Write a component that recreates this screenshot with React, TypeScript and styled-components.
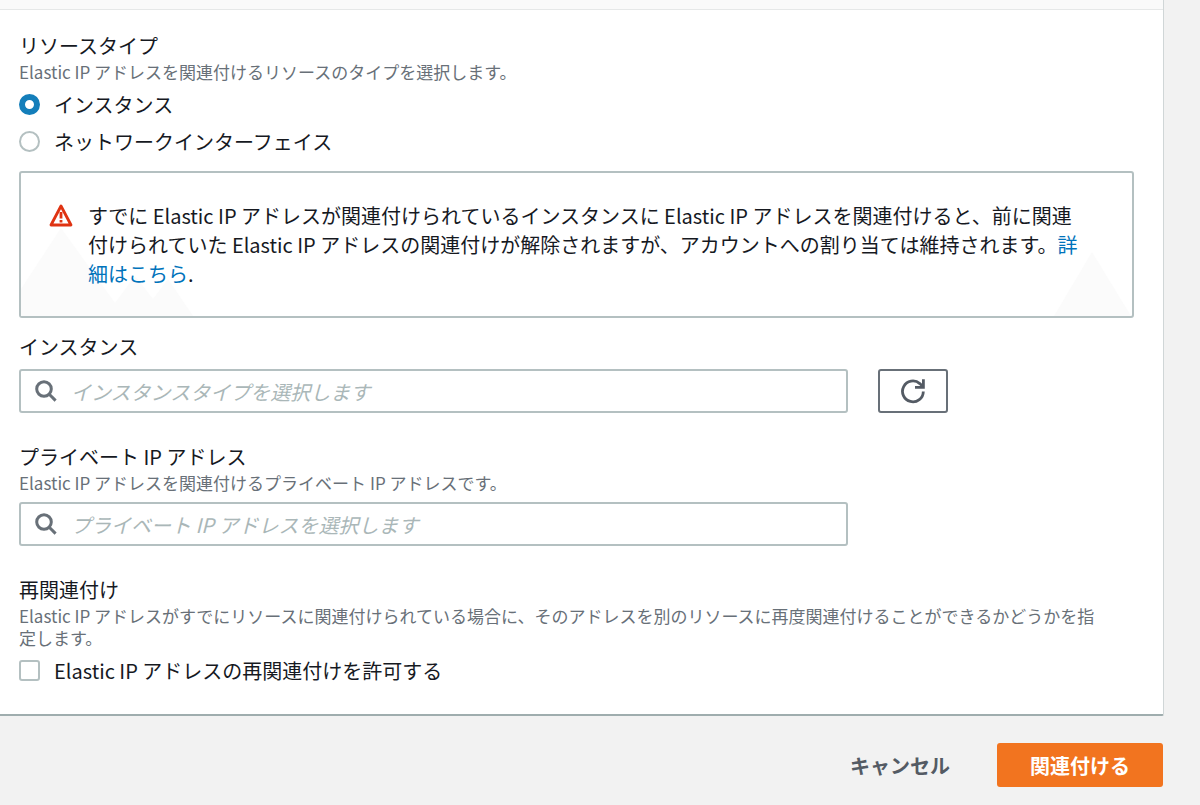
import React from "react";
import styled, { createGlobalStyle } from "styled-components";

const GlobalStyle = createGlobalStyle`
  *, *::before, *::after { box-sizing: border-box; }
  body {
    margin: 0;
    background: #f2f2f2;
    color: #16191f;
    font-family: "Noto Sans CJK JP", "Noto Sans", sans-serif;
    font-size: 20px;
    line-height: 29px;
  }
  button, input { font: inherit; }
`;

const Page = styled.main`
  padding-right: 36px;
`;

const Panel = styled.section`
  background: #fff;
  border-right: 1px solid #d0d6d7;
  border-bottom: 2px solid #9fadae;
  border-bottom-right-radius: 2px;
`;

const PanelHeader = styled.div`
  height: 10px;
  background: #fafafa;
  border-bottom: 1px solid #e6e8e8;
`;

const PanelBody = styled.div`
  display: flex;
  flex-direction: column;
  padding: 21px 29px 29px 19px;
`;

const Group = styled.fieldset`
  min-width: 0;
  margin: 0;
  padding: 0;
  border: 0;
`;

const Legend = styled.legend`
  padding: 0;
  margin: 0 0 1px;
`;

const FieldLabel = styled.label`
  display: block;
  margin-bottom: 1px;
`;

const Description = styled.p`
  margin: 0;
  padding-right: 24px;
  color: #687078;
  font-size: 17px;
  line-height: 22px;
`;

const Options = styled.div`
  display: flex;
  flex-direction: column;
  align-items: flex-start;
  gap: 8px;
  margin-top: 7px;
`;

const Option = styled.label`
  display: flex;
  align-items: center;
  gap: 14px;
`;

const Radio = styled.input.attrs({ type: "radio" })`
  appearance: none;
  width: 21px;
  height: 21px;
  margin: 0;
  border: 2px solid #b4c0c1;
  border-radius: 50%;
  background: #fff;
  &:checked {
    border: 6px solid #147eba;
  }
`;

const Checkbox = styled.input.attrs({ type: "checkbox" })`
  appearance: none;
  width: 21px;
  height: 21px;
  margin: 0;
  border: 2px solid #b4c0c1;
  border-radius: 3px;
  background: #fff;
  &:checked {
    border-color: #147eba;
    background: #147eba;
  }
`;

const Alert = styled.div`
  position: relative;
  display: flex;
  gap: 15px;
  margin: 15px 0 14px;
  padding: 28px 46px 28px 28px;
  border: 2px solid #b4c0c1;
  border-radius: 3px;
`;

const Peaks = styled.svg<{ $side: "left" | "right" }>`
  position: absolute;
  bottom: 0;
  ${(p) => p.$side}: 0;
  fill: #fbfbfb;
`;

const WarningIcon = styled.svg`
  position: relative;
  flex: none;
  margin-top: 2px;
`;

const AlertText = styled.p`
  position: relative;
  margin: 0;
`;

const Link = styled.a`
  color: #0073bb;
  text-decoration: none;
`;

const Columns = styled.div`
  display: grid;
  grid-template-columns: repeat(4, 1fr);
  column-gap: 30px;
`;

const SearchBox = styled.div`
  grid-column: span 3;
  display: flex;
  align-items: center;
  gap: 14px;
  height: 44px;
  padding: 0 14px;
  border: 2px solid #b4c0c1;
  border-radius: 3px;
`;

const SearchInput = styled.input`
  flex: 1;
  min-width: 0;
  padding: 0;
  border: 0;
  outline: 0;
  background: none;
  color: #16191f;
  &::placeholder {
    color: #aab7b8;
    font-style: italic;
    opacity: 1;
  }
`;

const Field = styled.div`
  margin-bottom: 29px;
`;

const Control = styled(Columns)`
  margin-top: 8px;
`;

const RefreshButton = styled.button`
  display: flex;
  align-items: center;
  justify-content: center;
  width: 70px;
  height: 44px;
  padding: 0;
  border: 2px solid #687078;
  border-radius: 3px;
  background: #fff;
  cursor: pointer;
`;

const Actions = styled.div`
  display: flex;
  justify-content: flex-end;
  gap: 16px;
  padding: 27px 1px 18px 0;
`;

const ActionButton = styled.button<{ $primary?: boolean }>`
  height: 44px;
  padding: 0 ${(p) => (p.$primary ? "33px" : "31px")};
  border: 0;
  border-radius: 3px;
  background: ${(p) => (p.$primary ? "#f2741f" : "transparent")};
  color: ${(p) => (p.$primary ? "#fff" : "#545b64")};
  font-weight: 700;
  cursor: pointer;
`;

const SearchIcon = () => (
  <svg width="22" height="22" viewBox="0 0 22 22" fill="none" stroke="#687078" strokeWidth="3" aria-hidden="true">
    <circle cx="9" cy="9" r="7.3" />
    <path d="M14 14l6.6 6.6" />
  </svg>
);

const RefreshIcon = () => (
  <svg width="26" height="26" viewBox="0 0 26 26" fill="none" stroke="#545b64" strokeWidth="2.8" aria-hidden="true">
    <path d="M23.3 13.4A10.4 10.4 0 1 1 19.8 5.6l3 2.9" />
    <path d="M23.4 1.2v8.1h-8.4" />
  </svg>
);

export default function App() {
  return (
    <>
      <GlobalStyle />
      <Page>
        <Panel>
          <PanelHeader />
          <PanelBody>
            <Group>
              <Legend>リソースタイプ</Legend>
              <Description>Elastic IP アドレスを関連付けるリソースのタイプを選択します。</Description>
              <Options>
                <Option>
                  <Radio name="resource" defaultChecked />
                  インスタンス
                </Option>
                <Option>
                  <Radio name="resource" />
                  ネットワークインターフェイス
                </Option>
              </Options>
            </Group>

            <Alert>
              <Peaks $side="left" width="172" height="88" viewBox="0 0 172 88" aria-hidden="true">
                <path d="M0 88V61L40 0l54 75 20-27 18 23 15-20 25 37z" />
              </Peaks>
              <Peaks $side="right" width="78" height="64" viewBox="0 0 78 64" aria-hidden="true">
                <path d="M0 64L38 0l39 64z" />
              </Peaks>
              <WarningIcon width="24" height="24" viewBox="0 0 24 24" fill="none" stroke="#df3312" aria-hidden="true">
                <path d="M12 3L22 22H2z" strokeWidth="2.8" strokeLinejoin="round" />
                <path d="M12 9v6.5M12 17v2.5" strokeWidth="2.8" />
              </WarningIcon>
              <AlertText>
                すでに Elastic IP アドレスが関連付けられているインスタンスに Elastic IP アドレスを関連付けると、前に関連付けられていた Elastic IP アドレスの関連付けが解除されますが、アカウントへの割り当ては維持されます。<Link href="#">詳細はこちら</Link>.
              </AlertText>
            </Alert>

            <Field>
              <FieldLabel htmlFor="instance">インスタンス</FieldLabel>
              <Control>
                <SearchBox>
                  <SearchIcon />
                  <SearchInput id="instance" placeholder="インスタンスタイプを選択します" />
                </SearchBox>
                <RefreshButton type="button" aria-label="更新">
                  <RefreshIcon />
                </RefreshButton>
              </Control>
            </Field>

            <Field>
              <FieldLabel htmlFor="private-ip">プライベート IP アドレス</FieldLabel>
              <Description>Elastic IP アドレスを関連付けるプライベート IP アドレスです。</Description>
              <Control>
                <SearchBox>
                  <SearchIcon />
                  <SearchInput id="private-ip" placeholder="プライベート IP アドレスを選択します" />
                </SearchBox>
              </Control>
            </Field>

            <Group>
              <Legend>再関連付け</Legend>
              <Description>
                Elastic IP アドレスがすでにリソースに関連付けられている場合に、そのアドレスを別のリソースに再度関連付けることができるかどうかを指定します。
              </Description>
              <Options>
                <Option>
                  <Checkbox />
                  Elastic IP アドレスの再関連付けを許可する
                </Option>
              </Options>
            </Group>
          </PanelBody>
        </Panel>
        <Actions>
          <ActionButton type="button">キャンセル</ActionButton>
          <ActionButton type="button" $primary>関連付ける</ActionButton>
        </Actions>
      </Page>
    </>
  );
}
